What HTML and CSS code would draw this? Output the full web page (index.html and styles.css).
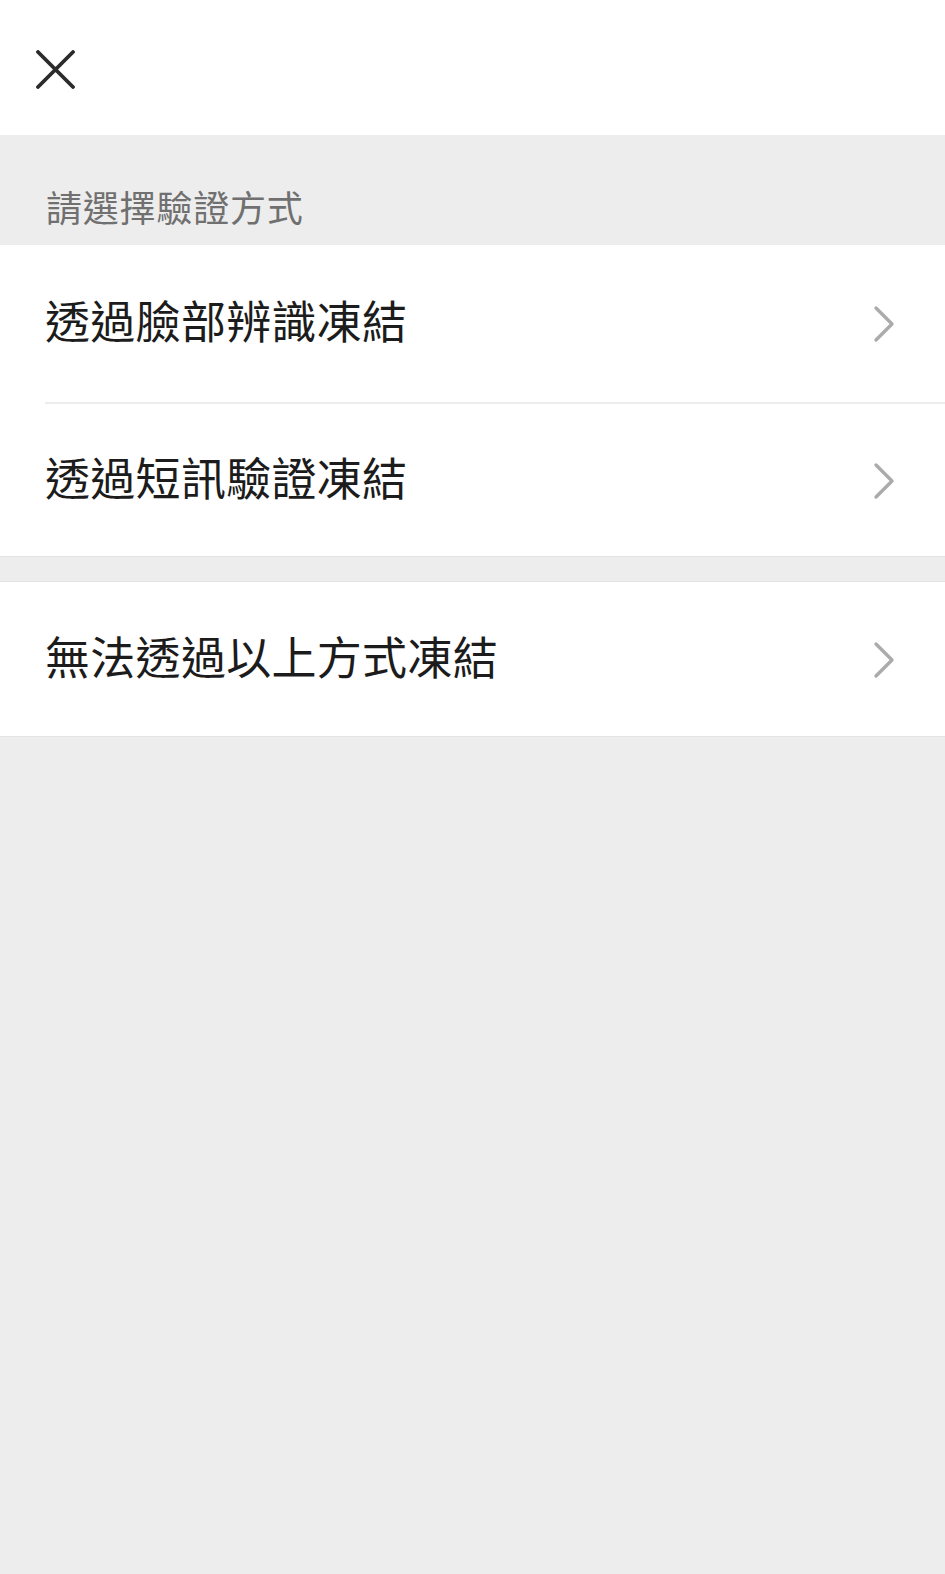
FILE: index.html
```html
<!DOCTYPE html>
<html lang="zh-Hant">
<head>
    <meta charset="UTF-8">
    <meta name="viewport" content="width=device-width, initial-scale=1.0">
    <title>選擇驗證方式</title>
    <link rel="stylesheet" href="styles.css">
</head>
<body>
<div class="header">
    <button class="close" type="button" aria-label="關閉">
        <svg width="39" height="39" viewBox="0 0 39 39">
            <path d="M2 2 L37 37 M37 2 L2 37" stroke="#2b2b2b" stroke-width="3.8" stroke-linecap="round" fill="none"/>
        </svg>
    </button>
</div>

<div class="section-title">請選擇驗證方式</div>

<div class="group">
    <div class="row">
        <span class="row-text">透過臉部辨識凍結</span>
        <svg class="chev" width="22" height="38" viewBox="0 0 22 38"><path d="M3 3 L19 19 L3 35" stroke="#ababab" stroke-width="3.4" stroke-linecap="round" stroke-linejoin="round" fill="none"/></svg>
    </div>
    <div class="row">
        <span class="row-text">透過短訊驗證凍結</span>
        <svg class="chev" width="22" height="38" viewBox="0 0 22 38"><path d="M3 3 L19 19 L3 35" stroke="#ababab" stroke-width="3.4" stroke-linecap="round" stroke-linejoin="round" fill="none"/></svg>
    </div>
</div>

<div class="group g2">
    <div class="row">
        <span class="row-text">無法透過以上方式凍結</span>
        <svg class="chev" width="22" height="38" viewBox="0 0 22 38"><path d="M3 3 L19 19 L3 35" stroke="#ababab" stroke-width="3.4" stroke-linecap="round" stroke-linejoin="round" fill="none"/></svg>
    </div>
</div>
</body>
</html>
```

FILE: styles.css
```css
html, body {
    margin: 0;
    padding: 0;
    min-height: 100%;
}

body {
    background-color: #ededed;
    font-family: "Noto Sans CJK TC", "Noto Sans", sans-serif;
    min-height: 1574px;
}

.header {
    background-color: #fff;
    height: 135px;
    display: flex;
    align-items: center;
    padding-left: 36px;
    box-sizing: border-box;
}

.close {
    background: none;
    border: 0;
    padding: 0;
    width: 39px;
    height: 39px;
    margin-top: 3px;
    display: flex;
}

.section-title {
    height: 110px;
    box-sizing: border-box;
    padding: 46px 0 0 46px;
    font-size: 36px;
    letter-spacing: 0.8px;
    line-height: 50px;
    color: #707070;
}

.group {
    background-color: #fff;
    border-bottom: 1px solid #e4e4e4;
}

.g2 {
    margin-top: 24px;
    border-top: 1px solid #e4e4e4;
}

.row {
    height: 157px;
    margin-left: 45px;
    padding-right: 50px;
    display: flex;
    align-items: center;
    justify-content: space-between;
}

.row + .row {
    border-top: 2px solid #ececec;
    height: 152px;
}

.g2 .row {
    height: 154px;
}

.row-text {
    font-size: 45px;
    letter-spacing: 0.3px;
    color: #1c1c1c;
    line-height: 1;
    margin-top: -8px;
}

.chev {
    display: block;
    margin-top: 1px;
}
```
